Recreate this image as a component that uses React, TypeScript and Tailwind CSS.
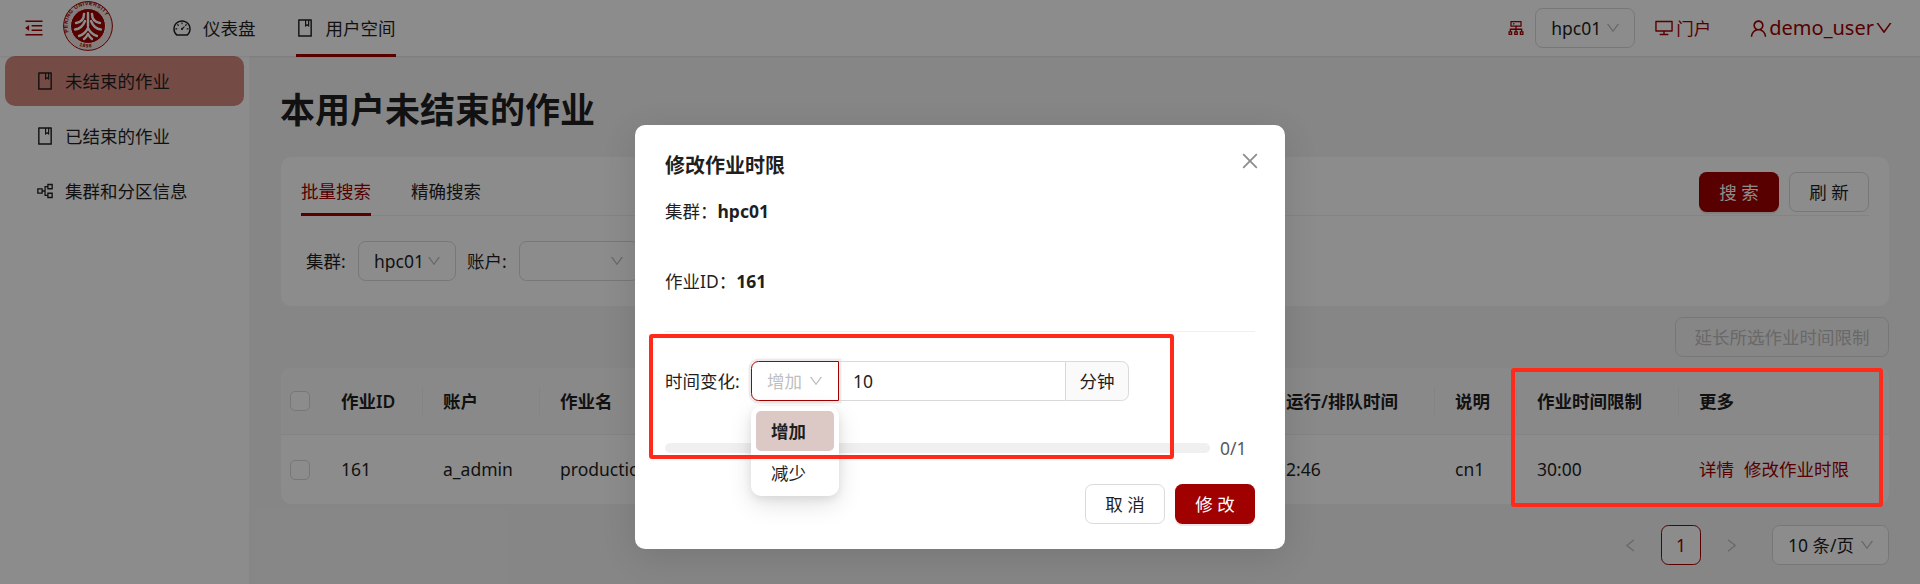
import React from "react";
import {
  AiOutlineBook,
  AiOutlineCluster,
  AiOutlineClose,
  AiOutlineDashboard,
  AiOutlineDesktop,
  AiOutlineDown,
  AiOutlineLeft,
  AiOutlineMenuFold,
  AiOutlinePartition,
  AiOutlineRight,
  AiOutlineUser,
} from "react-icons/ai";

function Logo() {
  return (
    <svg width="50" height="50" viewBox="0 0 50 50" className="shrink-0">
      <circle cx="25" cy="25" r="24.4" fill="#f4e4e4" stroke="#a00000" strokeWidth="1" />
      <circle cx="25" cy="25" r="17.5" fill="#a00000" stroke="#fff" strokeWidth="1" />
      <defs>
        <path id="seal-top" d="M5.5 31 A20.5 20.5 0 1 1 44.5 31" />
        <path id="seal-bottom" d="M16 44.6 A21.6 21.6 0 0 0 34 44.6" />
      </defs>
      <text fontSize="5.2" fontWeight="700" fill="#a00000" fontFamily="'Liberation Sans', sans-serif" letterSpacing="0.5">
        <textPath href="#seal-top">PEKING UNIVERSITY</textPath>
      </text>
      <text fontSize="5" fontWeight="700" fill="#a00000" fontFamily="'Liberation Sans', sans-serif" letterSpacing="0.6">
        <textPath href="#seal-bottom">1898</textPath>
      </text>
      <g fill="none" stroke="#fff" strokeWidth="2.4" strokeLinecap="round">
        <path d="M25 12 V25" />
        <path d="M21 13 C21 18 19 21 13 22" />
        <path d="M29 13 C29 18 31 21 37 22" />
        <path d="M22 20 C20 25 17 28 12 28.5" />
        <path d="M28 20 C30 25 33 28 38 28.5" />
        <path d="M25 27 C23 31 19.5 34 16 35" />
        <path d="M25 27 C27 31 30.5 34 34 35" />
        <path d="M25 33 C24 35 22.5 37 21 38" />
        <path d="M25 33 C26 35 27.5 37 29 38" />
      </g>
    </svg>
  );
}

function Select({ text, className }: { text: string; className: string }) {
  return (
    <div className={`flex h-10 items-center justify-between rounded-[7.5px] border border-[#d9d9d9] bg-white pl-[15px] pr-[13px] ${className}`}>
      <span>{text}</span>
      <AiOutlineDown className="text-[16px] text-[#bfbfbf]" />
    </div>
  );
}

function Check() {
  return <div className="ml-[9px] h-5 w-5 rounded-[5px] border border-[#d9d9d9] bg-white" />;
}

const sideItems = [
  { label: "未结束的作业", icon: <AiOutlineBook className="text-[20px]" />, active: true },
  { label: "已结束的作业", icon: <AiOutlineBook className="text-[20px]" /> },
  { label: "集群和分区信息", icon: <AiOutlinePartition className="text-[20px]" /> },
];

export default function App() {
  return (
    <div
      className="relative h-[584px] w-full overflow-hidden bg-[#f5f5f5] text-[17.5px] text-[#1f1f1f]"
      style={{ fontFamily: "'Noto Sans', 'Noto Sans CJK SC', sans-serif" }}
    >
      <header className="relative flex h-14 items-center bg-white pl-[23px] pr-[26px] shadow-[0_1px_2px_rgba(0,0,0,0.08)]">
        <AiOutlineMenuFold className="text-[22px] text-[#a00000]" />
        <div className="-mt-[4px] ml-[18px]">
          <Logo />
        </div>
        <nav className="ml-[59px] flex items-center">
          <div className="flex items-center gap-[11px]">
            <AiOutlineDashboard className="text-[20px]" />
            <span>仪表盘</span>
          </div>
          <div className="relative ml-[39px] flex items-center gap-[11px]">
            <AiOutlineBook className="text-[20px]" />
            <span>用户空间</span>
            <div className="absolute -bottom-[16px] left-[1px] h-[3px] w-[100px] bg-[#a00000]" />
          </div>
        </nav>
        <div className="ml-auto flex items-center text-[#a00000]">
          <AiOutlineCluster className="text-[20px]" />
          <Select text="hpc01" className="ml-[9px] w-[100px] text-[#1f1f1f]" />
          <AiOutlineDesktop className="ml-[19px] text-[20px]" />
          <span className="ml-[2px]">门户</span>
          <AiOutlineUser className="ml-[37px] text-[21px]" />
          <span className="text-[20px]">demo_user</span>
          <AiOutlineDown className="text-[20px]" />
        </div>
      </header>

      <div className="flex h-[528px]">
        <aside className="flex w-[249px] shrink-0 flex-col gap-[5px] bg-white pl-[5px] pr-[5px]">
          {sideItems.map((it) => (
            <div
              key={it.label}
              className={`flex h-[50px] items-center gap-[10px] rounded-[10px] pl-[30px] ${it.active ? "bg-[#d58a7f]" : ""}`}
            >
              {it.icon}
              <span>{it.label}</span>
            </div>
          ))}
        </aside>

        <main className="flex min-w-0 flex-1 flex-col pl-[32px] pr-[31px]">
          <h1 className="-ml-px mt-[31px] h-[45px] text-[35px] font-bold leading-[45px]">本用户未结束的作业</h1>

          <section className="mt-[25px] h-[149px] rounded-[10px] bg-white px-5 pt-[15px]">
            <div className="flex h-[44px] items-start justify-between border-b border-[#f0f0f0]">
              <div className="flex gap-10 pt-[6px]">
                <div className="relative h-[38px] text-[#a00000]">
                  批量搜索
                  <div className="absolute bottom-0 left-0 h-[3px] w-full bg-[#a00000]" />
                </div>
                <div>精确搜索</div>
              </div>
              <div className="flex gap-[10px]">
                <button className="h-10 w-20 rounded-[7.5px] bg-[#a00000] text-white shadow-[0_2px_0_rgba(160,0,0,0.1)]">搜 索</button>
                <button className="h-10 w-20 rounded-[7.5px] border border-[#d9d9d9] bg-white">刷 新</button>
              </div>
            </div>
            <div className="mt-[25px] flex h-10 items-center pl-[5px]">
              <span className="w-[52px]">集群:</span>
              <Select text="hpc01" className="w-[98px]" />
              <span className="ml-[11px] w-[52px]">账户:</span>
              <Select text="" className="w-[120px]" />
            </div>
          </section>

          <div className="mt-[11px] flex justify-end">
            <button className="h-10 w-[214px] rounded-[7.5px] border border-[#d9d9d9] bg-[#f5f5f5] text-[#bfbfbf]">延长所选作业时间限制</button>
          </div>

          <table className="mt-[11px] w-[1608px] table-fixed border-separate border-spacing-0 overflow-hidden rounded-[10px] bg-white">
            <colgroup>
              <col className="w-[40px]" />
              <col className="w-[102px]" />
              <col className="w-[117px]" />
              <col className="w-[726px]" />
              <col className="w-[169px]" />
              <col className="w-[82px]" />
              <col className="w-[162px]" />
              <col className="w-[210px]" />
            </colgroup>
            <thead>
              <tr className="h-[67px] bg-[#fafafa]">
                <th className="border-b border-[#f0f0f0] p-0"><Check /></th>
                {["作业ID", "账户", "作业名", "运行/排队时间", "说明", "作业时间限制"].map((t) => (
                  <th key={t} className="border-b border-[#f0f0f0] p-0 text-left font-semibold">
                    <div className="flex h-[28px] items-center border-r border-[#f0f0f0] pl-5">{t}</div>
                  </th>
                ))}
                <th className="border-b border-[#f0f0f0] p-0 pl-5 text-left font-semibold">更多</th>
              </tr>
            </thead>
            <tbody>
              <tr className="h-[69px]">
                <td className="p-0"><Check /></td>
                <td className="p-0 pl-5">161</td>
                <td className="p-0 pl-5">a_admin</td>
                <td className="p-0 pl-5">production</td>
                <td className="p-0 pl-5">2:46</td>
                <td className="p-0 pl-5">cn1</td>
                <td className="p-0 pl-5">30:00</td>
                <td className="p-0 pl-5 text-[#a00000]">
                  <span>详情</span>
                  <span className="ml-[10px]">修改作业时限</span>
                </td>
              </tr>
            </tbody>
          </table>

          <div className="mt-[21px] flex items-center justify-end">
            <AiOutlineLeft className="text-[17px] text-[#bfbfbf]" />
            <div className="ml-[22px] flex h-10 w-10 items-center justify-center rounded-[7.5px] border border-[#a00000] bg-white text-[#a00000]">1</div>
            <AiOutlineRight className="ml-[22px] text-[17px] text-[#bfbfbf]" />
            <Select text="10 条/页" className="ml-[32px] w-[117px]" />
          </div>
        </main>
      </div>

      <div className="absolute inset-0 bg-black/45" />

      <div className="absolute left-[635px] top-[125px] h-[424px] w-[650px] rounded-[10px] bg-white px-[30px] shadow-[0_8px_35px_rgba(0,0,0,0.12)]">
        <AiOutlineClose className="absolute right-[24px] top-[25px] text-[22px] text-[#8c8c8c]" />
        <div className="mt-[27px] flex h-7 items-center text-[20px] font-semibold">修改作业时限</div>
        <div className="mt-[19px] flex h-6 items-center">
          集群：<b className="font-bold">hpc01</b>
        </div>
        <div className="mt-[46px] flex h-6 items-center">
          作业ID：<b className="font-bold">161</b>
        </div>
        <div className="mt-[38px] h-px bg-[#f0f0f0]" />

        <div className="relative mt-[29px] flex h-10 items-center">
          <span className="w-[86px]">时间变化:</span>
          <div className="flex h-10 w-[88px] items-center justify-between rounded-l-[7.5px] border border-[#a00000] pl-[15px] pr-[14px] shadow-[0_0_0_2.5px_rgba(120,80,80,0.12)]">
            <span className="text-[#bfbfbf]">增加</span>
            <AiOutlineDown className="text-[16px] text-[#bfbfbf]" />
          </div>
          <div className="flex h-10 w-[226px] items-center border-y border-[#d9d9d9] pl-[14px]">10</div>
          <div className="flex h-10 w-[64px] items-center justify-center rounded-r-[7.5px] border border-[#d9d9d9] bg-[#fafafa]">分钟</div>

          <div className="absolute left-[86px] top-[45px] z-10 h-[90px] w-[88px] rounded-[10px] bg-white p-[5px] shadow-[0_8px_25px_rgba(0,0,0,0.12),0_3px_8px_rgba(0,0,0,0.08)]">
            <div className="flex h-10 items-center rounded-[5px] bg-[#dcc9c6] pl-[15px] font-semibold">增加</div>
            <div className="mt-[2px] flex h-10 items-center pl-[15px]">减少</div>
          </div>
        </div>

        <div className="mt-[35px] flex h-6 items-center">
          <div className="h-2.5 w-[545px] rounded-full bg-[#f0f0f0]" />
          <span className="ml-[10px] text-[#595959]">0/1</span>
        </div>

        <div className="mt-[24px] flex justify-end gap-[10px]">
          <button className="h-10 w-20 rounded-[7.5px] border border-[#d9d9d9] bg-white">取 消</button>
          <button className="h-10 w-20 rounded-[7.5px] bg-[#a00000] text-white shadow-[0_2px_0_rgba(160,0,0,0.1)]">修 改</button>
        </div>
      </div>

      <div className="absolute left-[649px] top-[334px] z-20 h-[125px] w-[525px] rounded-[3px] border-[4px] border-[#ff2a1a]" />
      <div className="absolute left-[1511px] top-[368px] z-20 h-[139px] w-[372px] rounded-[3px] border-[4px] border-[#ff2a1a]" />
    </div>
  );
}
